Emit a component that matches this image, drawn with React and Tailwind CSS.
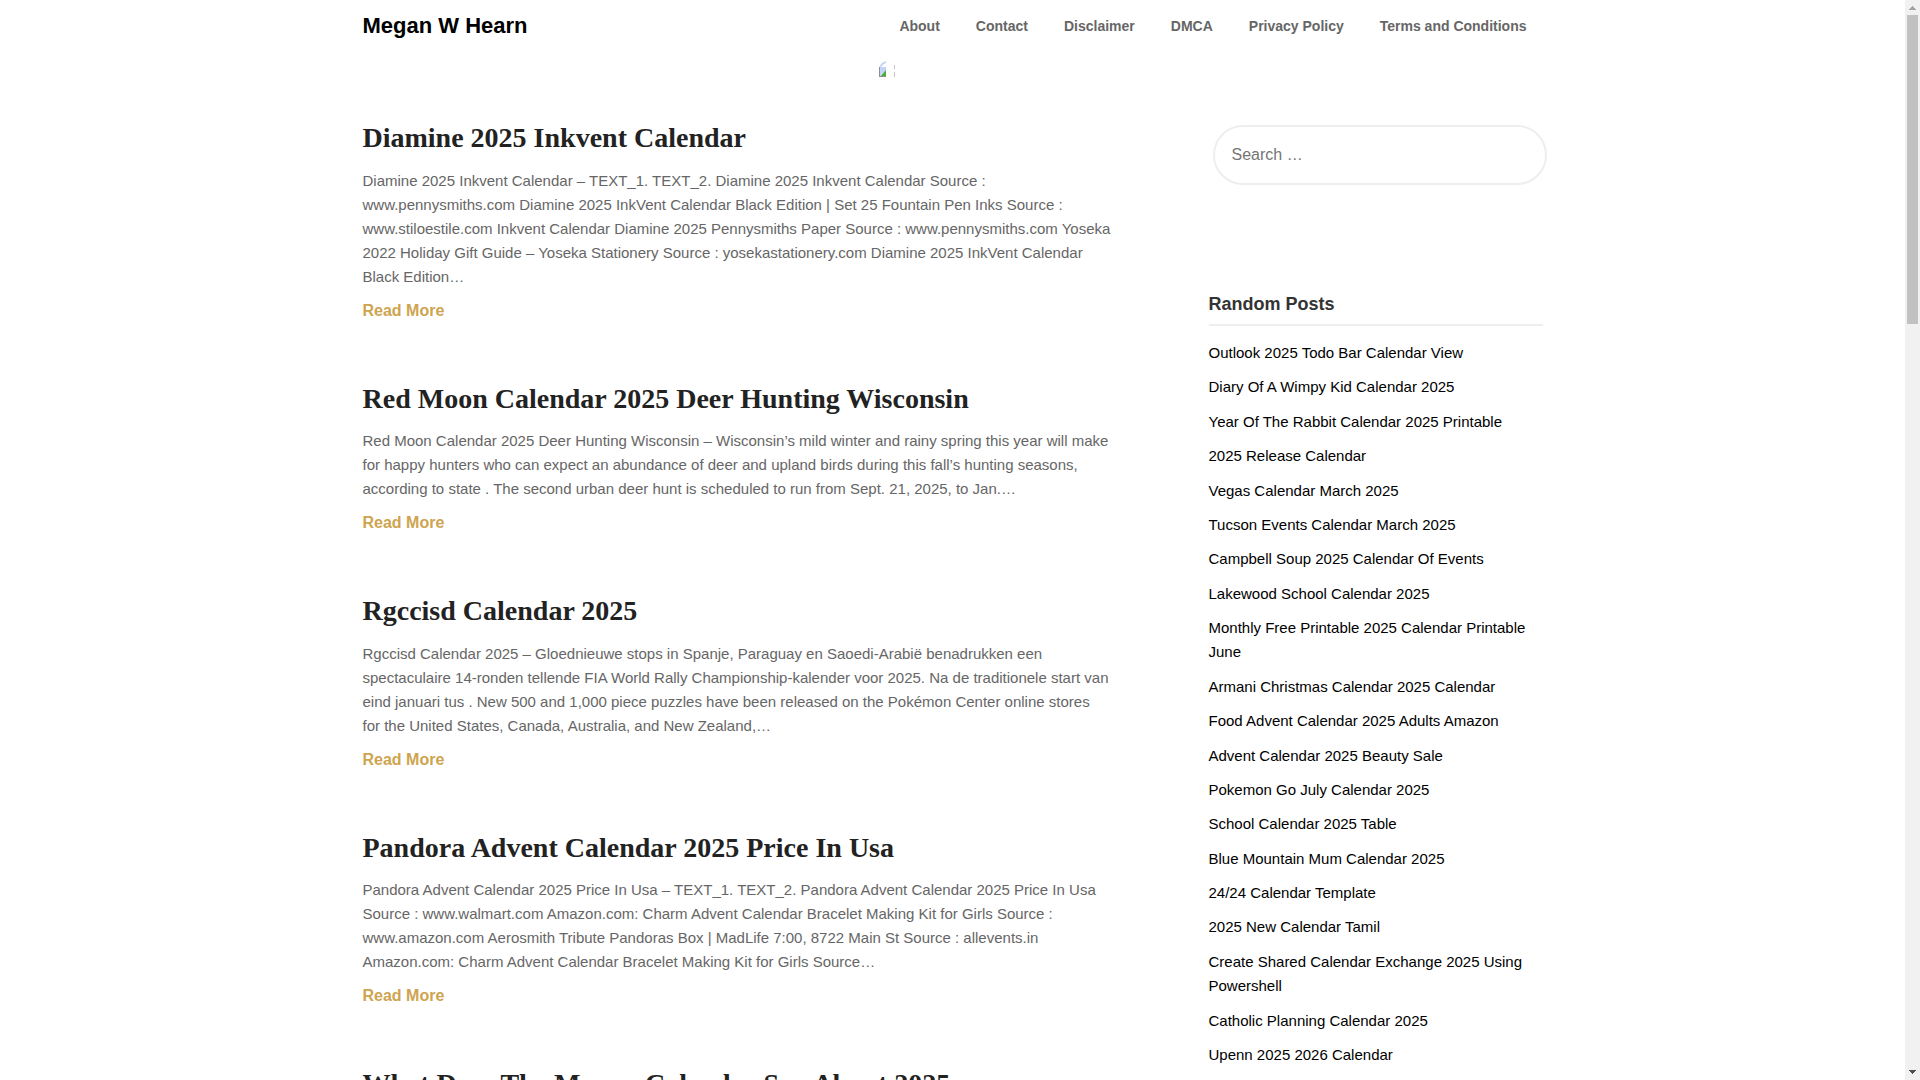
const navLinks = [
  "About",
  "Contact",
  "Disclaimer",
  "DMCA",
  "Privacy Policy",
  "Terms and Conditions",
];

const posts = [
  {
    title: "Diamine 2025 Inkvent Calendar",
    excerpt:
      "Diamine 2025 Inkvent Calendar – TEXT_1. TEXT_2. Diamine 2025 Inkvent Calendar Source : www.pennysmiths.com Diamine 2025 InkVent Calendar Black Edition | Set 25 Fountain Pen Inks Source : www.stiloestile.com Inkvent Calendar Diamine 2025 Pennysmiths Paper Source : www.pennysmiths.com Yoseka 2022 Holiday Gift Guide – Yoseka Stationery Source : yosekastationery.com Diamine 2025 InkVent Calendar Black Edition…",
  },
  {
    title: "Red Moon Calendar 2025 Deer Hunting Wisconsin",
    excerpt:
      "Red Moon Calendar 2025 Deer Hunting Wisconsin – Wisconsin’s mild winter and rainy spring this year will make for happy hunters who can expect an abundance of deer and upland birds during this fall’s hunting seasons, according to state . The second urban deer hunt is scheduled to run from Sept. 21, 2025, to Jan.…",
  },
  {
    title: "Rgccisd Calendar 2025",
    excerpt:
      "Rgccisd Calendar 2025 – Gloednieuwe stops in Spanje, Paraguay en Saoedi-Arabië benadrukken een spectaculaire 14-ronden tellende FIA World Rally Championship-kalender voor 2025. Na de traditionele start van eind januari tus . New 500 and 1,000 piece puzzles have been released on the Pokémon Center online stores for the United States, Canada, Australia, and New Zealand,…",
  },
  {
    title: "Pandora Advent Calendar 2025 Price In Usa",
    excerpt:
      "Pandora Advent Calendar 2025 Price In Usa – TEXT_1. TEXT_2. Pandora Advent Calendar 2025 Price In Usa Source : www.walmart.com Amazon.com: Charm Advent Calendar Bracelet Making Kit for Girls Source : www.amazon.com Aerosmith Tribute Pandoras Box | MadLife 7:00, 8722 Main St Source : allevents.in Amazon.com: Charm Advent Calendar Bracelet Making Kit for Girls Source…",
  },
  { title: "What Does The Mayan Calendar Say About 2025" },
];

const randomPosts = [
  "Outlook 2025 Todo Bar Calendar View",
  "Diary Of A Wimpy Kid Calendar 2025",
  "Year Of The Rabbit Calendar 2025 Printable",
  "2025 Release Calendar",
  "Vegas Calendar March 2025",
  "Tucson Events Calendar March 2025",
  "Campbell Soup 2025 Calendar Of Events",
  "Lakewood School Calendar 2025",
  "Monthly Free Printable 2025 Calendar Printable June",
  "Armani Christmas Calendar 2025 Calendar",
  "Food Advent Calendar 2025 Adults Amazon",
  "Advent Calendar 2025 Beauty Sale",
  "Pokemon Go July Calendar 2025",
  "School Calendar 2025 Table",
  "Blue Mountain Mum Calendar 2025",
  "24/24 Calendar Template",
  "2025 New Calendar Tamil",
  "Create Shared Calendar Exchange 2025 Using Powershell",
  "Catholic Planning Calendar 2025",
  "Upenn 2025 2026 Calendar",
];

function Header() {
  return (
    <header className="mx-auto flex min-h-[51px] max-w-[1180px] flex-wrap items-center justify-between">
      <a href="#" className="text-[22px] font-bold text-black">
        Megan W Hearn
      </a>
      <nav className="flex flex-wrap gap-x-9 pr-4">
        {navLinks.map((link) => (
          <a
            key={link}
            href="#"
            className="text-sm font-bold text-[#666] hover:text-black"
          >
            {link}
          </a>
        ))}
      </nav>
    </header>
  );
}

// Missing banner image, clipped by its rounded corners
function Banner() {
  return (
    <div className="mx-auto w-[147px] pt-2.5">
      <svg width="16" height="16" viewBox="0 0 16 16" aria-hidden="true">
        <path d="M0 16V7Q1 2 7 0V16Z" fill="#c3d4f7" />
        <path d="M2 6Q4 3 7 2V6Z" fill="#fff" />
        <path d="M2 15L7 9V15Z" fill="#4fae32" />
        <path d="M0 6H1V15H7V16H0Z" fill="#8e8e8e" />
        <path d="M15 4H16V8H15ZM15 11H16V16H15Z" fill="#c4c4c4" />
      </svg>
    </div>
  );
}

function Post({ post }) {
  return (
    <article className="mb-[59px]">
      <h2 className="mb-3.5 font-['Liberation_Serif',serif] text-[28px] leading-[1.2] font-bold text-[#222]">
        <a href="#">{post.title}</a>
      </h2>
      {post.excerpt && (
        <>
          <p className="mb-2.5 text-[15px] leading-6 text-[#666]">
            {post.excerpt}
          </p>
          <a
            href="#"
            className="block text-base leading-6 font-bold text-[#cea44f]"
          >
            Read More
          </a>
        </>
      )}
    </article>
  );
}

function Sidebar() {
  return (
    <aside className="w-full shrink-0 pt-1 lg:w-[334px]">
      <form className="-mr-1 mb-[106px] ml-1">
        <input
          type="search"
          aria-label="Search for:"
          placeholder="Search …"
          className="h-[60px] w-full rounded-[30px] border-2 border-[#eee] px-[17px] text-base text-[#666] outline-none placeholder:text-[#757575]"
        />
      </form>
      <h2 className="mb-2.5 border-b-2 border-[#eee] pb-[7px] text-lg leading-[26px] font-bold text-[#333]">
        Random Posts
      </h2>
      <ul>
        {randomPosts.map((title) => (
          <li key={title} className="py-[5px] text-[15px] leading-relaxed">
            <a href="#" className="text-black">
              {title}
            </a>
          </li>
        ))}
      </ul>
    </aside>
  );
}

function Scrollbar() {
  return (
    <div
      aria-hidden="true"
      className="flex w-[15px] shrink-0 flex-col items-center bg-[#f1f1f1]"
    >
      <svg width="15" height="15" viewBox="0 0 15 15" className="shrink-0">
        <path
          d="M7 6H8V7H9V8H10V9H11V10H4V9H5V8H6V7H7Z"
          fill="#a3a3a3"
        />
      </svg>
      <div className="h-[309px] w-[11px] bg-[#c1c1c1]" />
      <svg
        width="15"
        height="15"
        viewBox="0 0 15 15"
        className="mt-auto shrink-0"
      >
        <path
          d="M4 5H11V6H10V7H9V8H8V9H7V8H6V7H5V6H4Z"
          fill="#505050"
        />
      </svg>
    </div>
  );
}

export default function App() {
  return (
    <div className="flex h-screen bg-white font-['Liberation_Sans',Arial,sans-serif]">
      <div className="min-w-0 flex-1 overflow-hidden">
        <Header />
        <Banner />
        <div className="mx-auto flex max-w-[1180px] flex-col pt-11 lg:flex-row lg:gap-[98px]">
          <main className="min-w-0 flex-1">
            {posts.map((post) => (
              <Post key={post.title} post={post} />
            ))}
          </main>
          <Sidebar />
        </div>
      </div>
      <Scrollbar />
    </div>
  );
}
